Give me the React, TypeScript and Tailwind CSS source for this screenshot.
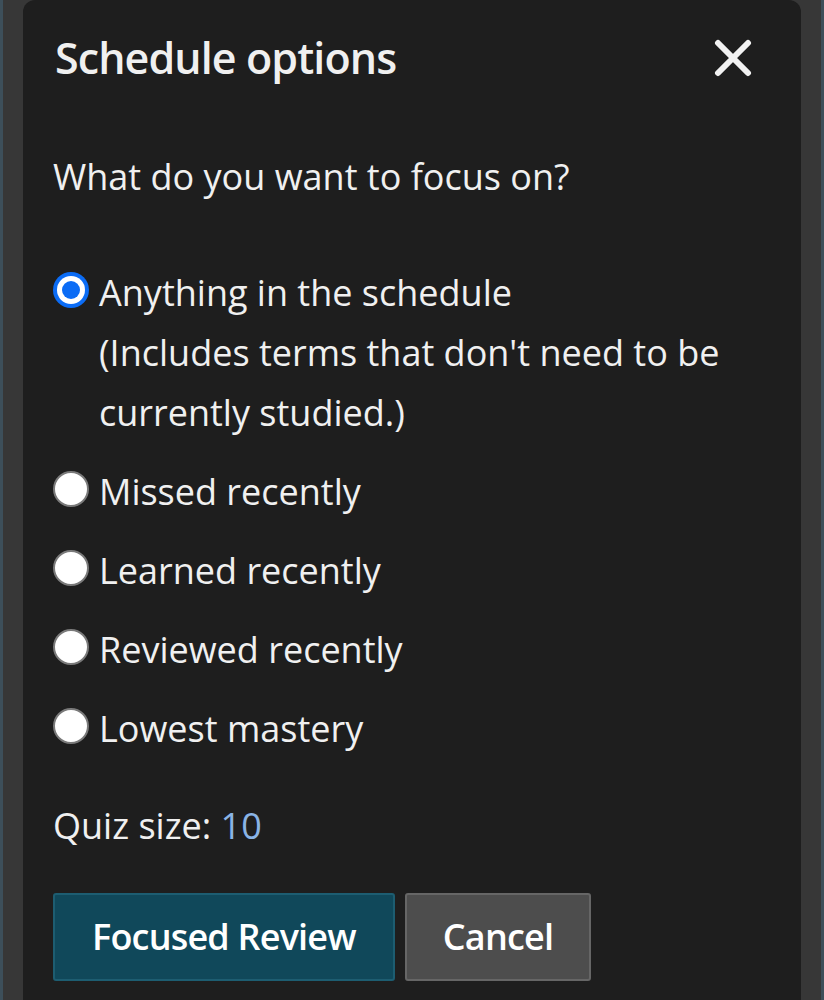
import React, { useState } from "react";

const options = [
  {
    id: "anything",
    label: "Anything in the schedule",
    note: "(Includes terms that don't need to be currently studied.)",
  },
  { id: "missed", label: "Missed recently" },
  { id: "learned", label: "Learned recently" },
  { id: "reviewed", label: "Reviewed recently" },
  { id: "lowest", label: "Lowest mastery" },
];

const Radio = ({ checked }: { checked: boolean }) =>
  checked ? (
    <span className="flex h-[36px] w-[36px] shrink-0 items-center justify-center rounded-full bg-[#0b6cf5]">
      <span className="flex h-[28px] w-[28px] items-center justify-center rounded-full bg-white">
        <span className="h-[18px] w-[18px] rounded-full bg-[#0b6cf5]" />
      </span>
    </span>
  ) : (
    <span className="h-[36px] w-[36px] shrink-0 rounded-full border-[2px] border-[#7a7a7a] bg-white" />
  );

export default function App() {
  const [selected, setSelected] = useState("anything");

  return (
    <div className="h-[1000px] w-[824px] overflow-hidden bg-[#3d4f5a] px-[3px] font-['Open_Sans',sans-serif]">
      <div className="h-full bg-[#373737] px-[20px]">
        <div className="flex h-full flex-col rounded-t-[12px] bg-[#1e1e1e] pl-[30px] pr-[48px] text-[#f0f0f0]">
          <div className="flex items-center justify-between pt-[28px]">
            <h1 className="ml-[2px] text-[43px] font-semibold leading-[60px] tracking-[-0.9px]">
              Schedule options
            </h1>
            <button className="flex h-[40px] w-[40px] items-center justify-center">
              <svg width="38" height="38" viewBox="0 0 38 38" fill="none">
                <path
                  d="M4 4L34 34M34 4L4 34"
                  stroke="#f2f2f2"
                  strokeWidth="6"
                  strokeLinecap="round"
                />
              </svg>
            </button>
          </div>

          <p className="mt-[59px] text-[36px] leading-[60px]">
            What do you want to focus on?
          </p>

          <div className="mt-[56px] flex flex-col gap-[19px]">
            {options.map((o) => (
              <label
                key={o.id}
                onClick={() => setSelected(o.id)}
                className="flex cursor-pointer items-start gap-[10px]"
              >
                <span className="mt-[-3px] flex h-[60px] items-center">
                  <Radio checked={selected === o.id} />
                </span>
                <span className="text-[36px] leading-[60px]">
                  {o.label}
                  {o.note && <span className="block">{o.note}</span>}
                </span>
              </label>
            ))}
          </div>

          <p className="mt-[37px] text-[36px] leading-[60px]">
            Quiz size: <span className="text-[#8ab4e6]">10</span>
          </p>

          <div className="mt-[37px] flex gap-[10px]">
            <button className="h-[88px] rounded-[3px] border-[2px] border-[#1d5d71] bg-[#10485a] px-[37px] text-[36px] font-semibold tracking-[-0.8px] text-white">
              Focused Review
            </button>
            <button className="h-[88px] rounded-[3px] border-[2px] border-[#666666] bg-[#4d4d4d] px-[36px] text-[36px] font-semibold tracking-[-0.8px] text-white">
              Cancel
            </button>
          </div>
        </div>
      </div>
    </div>
  );
}
